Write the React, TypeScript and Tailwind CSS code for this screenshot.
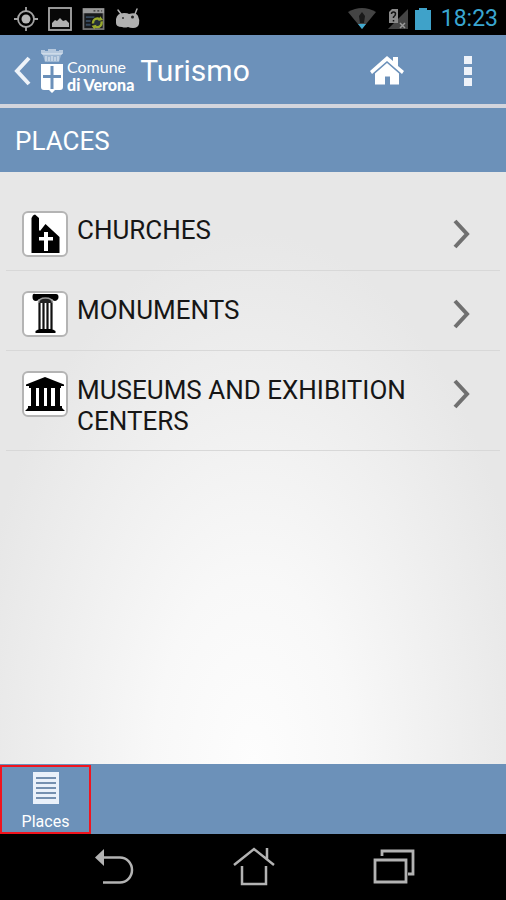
import React from 'react';

interface Place {
    id: string;
    label: string;
    icon: React.ReactNode;
}

const ChurchIcon = () => (
    <svg viewBox="2 2 42 42" className="w-full h-full" aria-hidden="true">
        <path d="M9.500 42V7L11 4.500L13 3.500L17 7V19L18 20L23.500 13L37.500 26V42Z" fill="#000" />
        <path d="M22 21h4v5h5v3.500h-5V40h-4V29.500h-5V26h5Z" fill="#fff" />
    </svg>
);

const ColumnIcon = () => (
    <svg viewBox="2 2 42 42" className="w-full h-full" aria-hidden="true">
        <path d="M13 3h21q2.500 0 2.500 3T33 10q-2 0-3-2H17q-1 2-3 2-3.500 0-3.500-4T13 3Z" fill="#000" />
        <path d="M16.500 12q0-5 7-5t7 5" fill="#222" stroke="#999" strokeWidth="1.500" />
        <path d="M17.500 12v26M21.500 12v26M25.500 12v26M29.500 12v26" stroke="#111" strokeWidth="2.200" />
        <path d="M17 38h13l3.500 2v2h-20v-2Z" fill="#000" />
    </svg>
);

const MuseumIcon = () => (
    <svg viewBox="2 2 42 42" className="w-full h-full" aria-hidden="true">
        <path d="M23 6L42 13.500V15H39v2H7v-2H4v-1.500Z" fill="#000" />
        <path d="M9 17h5v19H9ZM17 17h5v19h-5ZM25 17h4v19h-4ZM33 17h5v19h-5Z" fill="#000" />
        <path d="M6 35h34v2l3 3H3l3-3Z" fill="#000" />
    </svg>
);

const places: Place[] = [
    { id: 'churches', label: 'CHURCHES', icon: <ChurchIcon /> },
    { id: 'monuments', label: 'MONUMENTS', icon: <ColumnIcon /> },
    { id: 'museums', label: 'MUSEUMS AND EXHIBITION CENTERS', icon: <MuseumIcon /> },
];

const StatusBar = () => (
    <div className="flex h-[35px] items-center justify-between bg-black pl-3.5 pr-2 pt-0.5">
        <div className="flex items-center gap-2.5">
            <svg viewBox="0 0 24 24" className="h-6 w-6" fill="none" stroke="#a3a3a3" strokeWidth="1.800" aria-hidden="true">
                <circle cx="12" cy="12" r="8" />
                <circle cx="12" cy="12" r="4.500" fill="#b5b5b5" stroke="none" />
                <path d="M12 0v4M12 20v4M0 12h4M20 12h4" />
            </svg>
            <svg viewBox="0 0 24 24" className="h-6 w-6" aria-hidden="true">
                <rect x="1" y="1" width="22" height="22" fill="#080808" stroke="#a8a8a8" strokeWidth="1.800" />
                <path d="M4 20v-4l3-3 2 1 3-3 3 3 3-1 3 3v4Z" fill="#b0b0b0" />
            </svg>
            <svg viewBox="0 0 24 24" className="h-6 w-[23px]" aria-hidden="true">
                <rect x="1.500" y="1.500" width="21" height="21" fill="#17191b" stroke="#777" strokeWidth="1.800" />
                <path d="M1 1h22v5H1Z" fill="#9a9a9a" />
                <path d="M12 3.500h2M16 3.500h2M20 3.500h1" stroke="#333" strokeWidth="1.500" />
                <path d="M4 10h9M4 14h5M4 18h5" stroke="#34475c" strokeWidth="2" />
                <circle cx="16" cy="16" r="4.500" fill="#24303a" stroke="#98a92b" strokeWidth="2.500" strokeDasharray="10 3" />
                <path d="M19 9l3 4-5 1ZM13 23l-3-4 5-1Z" fill="#98a92b" />
            </svg>
            <svg viewBox="0 0 26 24" className="h-6 w-[26px]" aria-hidden="true">
                <path d="M3 3l3 4M22 2l-2 5" stroke="#b0b0b0" strokeWidth="1.500" strokeLinecap="round" />
                <path d="M1 12q1-6 8-6 4 0 5 1 7-2 9 2 2 4 1 8-1 4-6 4-3 0-5-1-3 1-6 0-6 0-6-4Z" fill="#b0b0b0" />
                <circle cx="8" cy="11" r="1" fill="#333" />
                <circle cx="17.500" cy="10" r="1.500" fill="#222" />
            </svg>
        </div>
        <div className="flex items-center">
            <svg viewBox="0 0 30 24" className="h-6 w-[30px]" aria-hidden="true">
                <path d="M1 5q14-8 28 0L15 22Z" fill="#444" />
                <path d="M15 5l3 4-1 7h-4l-1-7Z" fill="#191919" />
                <path d="M11 17h8l-4 5Z" fill="#41a9cf" />
            </svg>
            <svg viewBox="0 0 22 24" className="ml-2.5 h-6 w-[22px]" aria-hidden="true">
                <path d="M21 2v20H1Z" fill="#444" />
                <path d="M2 5l3-3h6v14H2Z" fill="#8a8a8a" />
                <path d="M4.500 7q0-2 2-2t2 2q0 1.500-2 3v1M6.500 13v1.500" stroke="#111" strokeWidth="1.500" fill="none" />
                <path d="M13 16l5 5M18 16l-5 5" stroke="#999" strokeWidth="1.500" />
            </svg>
            <svg viewBox="0 0 16 24" className="ml-1.5 h-6 w-4" aria-hidden="true">
                <path d="M0 3h4V1h8v2h4v20H0Z" fill="#3fa2c9" />
            </svg>
            <time className="ml-2.5 text-[23px] leading-6 text-[#3aa6d0]">18:23</time>
        </div>
    </div>
);

const ComuneLogo = () => (
    <div className="flex h-12 items-end text-white">
        <svg viewBox="0 0 26 46" className="h-[46px] w-[26px]" aria-hidden="true">
            <path d="M3 3h20l-3 10H6Z" fill="#9fb8d3" />
            <path d="M2 5V1h4v1h3V0h8v2h3V1h4v4" fill="#b6c9de" />
            <path d="M3 5h20M7 7v5M10 8v4M13 7v5M16 8v4M19 7v5" stroke="#e6edf5" strokeWidth="1" />
            <path d="M2 15h22v23q0 3-3 3h-5l-3 3-3-3H5q-3 0-3-3Z" fill="#fff" />
            <path d="M11.500 17h3v9H22v3h-7.500v11h-3V29H4v-3h7.500Z" fill="#6b90b9" />
        </svg>
        <div className="ml-0.5 pb-px font-['Lato',sans-serif] text-base leading-[18px]">
            <div>Comune</div>
            <div className="font-black">di Verona</div>
        </div>
    </div>
);

const AppBar = () => (
    <header className="flex h-[73px] items-center border-b-4 border-[#d3d5dd] bg-[#6c91ba] pl-3.5 pr-6 pt-0.5 text-white">
        <button aria-label="Back" className="mr-2">
            <svg viewBox="0 0 17 30" className="h-[30px] w-[17px]" fill="none" stroke="#eef3f9" strokeWidth="4" aria-hidden="true">
                <path d="M15 2L3 15l12 13" />
            </svg>
        </button>
        <ComuneLogo />
        <h1 className="ml-1.5 flex-1 text-[30px] leading-9">Turismo</h1>
        <button aria-label="Home">
            <svg viewBox="0 0 34 30" className="h-[30px] w-[34px]" fill="#fff" aria-hidden="true">
                <path d="M17 0l6 5V1h5v9l6 5-2 3L17 5 2 18l-2-3Z" />
                <path d="M17 7l12 10.500v11h-9v-8h-5v8H5v-11Z" />
            </svg>
        </button>
        <button aria-label="More options" className="ml-[50px] flex w-7 flex-col items-center gap-[3px]">
            <span className="h-2 w-2 bg-[#eef2f9]" />
            <span className="h-2 w-2 bg-[#eef2f9]" />
            <span className="h-2 w-2 bg-[#eef2f9]" />
        </button>
    </header>
);

const PlaceRow: React.FC<{ place: Place }> = ({ place }) => (
    <li className="border-b border-[#d8d8d8]">
        <button className="flex w-full items-start pb-[13px] pl-4 pr-[30px] pt-5 text-left">
            <span className="h-[46px] w-[46px] shrink-0 rounded-md border-2 border-[#b4b4b4] bg-white">
                {place.icon}
            </span>
            <span className="ml-[9px] mt-1 flex-1 text-[26px] leading-[31px] text-[#161616]">{place.label}</span>
            <svg viewBox="0 0 17 30" className="ml-6 mt-2 h-[30px] w-[17px]" fill="none" stroke="#707070" strokeWidth="4" aria-hidden="true">
                <path d="M2 2l12 13L2 28" />
            </svg>
        </button>
    </li>
);

const SystemNav = () => (
    <nav className="flex h-[66px] items-center justify-center gap-[98px] bg-black pl-[3px] text-[#b3b3b3]">
        <button aria-label="Back">
            <svg viewBox="0 0 40 40" className="h-10 w-10" fill="none" stroke="currentColor" strokeWidth="2.500" aria-hidden="true">
                <path d="M9 10.500h16a12 12.500 0 0 1 0 25H8" />
                <path d="M0 10.500l9-8.500v17Z" fill="currentColor" stroke="none" />
            </svg>
        </button>
        <button aria-label="Home">
            <svg viewBox="0 0 42 40" className="h-10 w-[42px]" fill="none" stroke="currentColor" strokeWidth="2.500" aria-hidden="true">
                <path d="M1 18L21 2l20 16M34 1v11" />
                <path d="M9 19v18h24V19" />
            </svg>
        </button>
        <button aria-label="Recent apps">
            <svg viewBox="0 0 42 40" className="h-10 w-[42px]" fill="none" stroke="currentColor" strokeWidth="2.800" aria-hidden="true">
                <path d="M2 13h31v22H2Z" />
                <path d="M9 9V4h31v23h-5" />
            </svg>
        </button>
    </nav>
);

const App = () => {
    return (
        <div className="flex min-h-screen flex-col bg-black font-['Roboto',sans-serif]">
            <StatusBar />
            <AppBar />
            <h2 className="flex h-16 items-center bg-[#6c91b9] px-[15px] pt-0.5 text-[26px] leading-8 text-white">PLACES</h2>
            <main className="flex-1 bg-[radial-gradient(ellipse_56%_90%_at_50%_100%,#fdfdfd_0%,#f8f8f8_35%,#e7e7e7_100%)] px-1.5 pt-[19px]">
                <ul>
                    {places.map(place => (
                        <PlaceRow key={place.id} place={place} />
                    ))}
                </ul>
            </main>
            <div className="flex h-[70px] bg-[#6c91b9] pt-px">
                <button className="flex w-[91px] flex-col items-center border-2 border-[#f0141e] pt-[5px] text-white">
                    <svg viewBox="0 0 26 32" className="h-8 w-[26px]" aria-hidden="true">
                        <path d="M0 0h26v32H0Z" fill="#eaf1fa" />
                        <path d="M3 6h20M3 11h20M3 16h20M3 21h20M3 26h20" stroke="#7590b0" strokeWidth="2" />
                    </svg>
                    <span className="mt-2 text-base leading-5">Places</span>
                </button>
            </div>
            <SystemNav />
        </div>
    );
};

export default App;
